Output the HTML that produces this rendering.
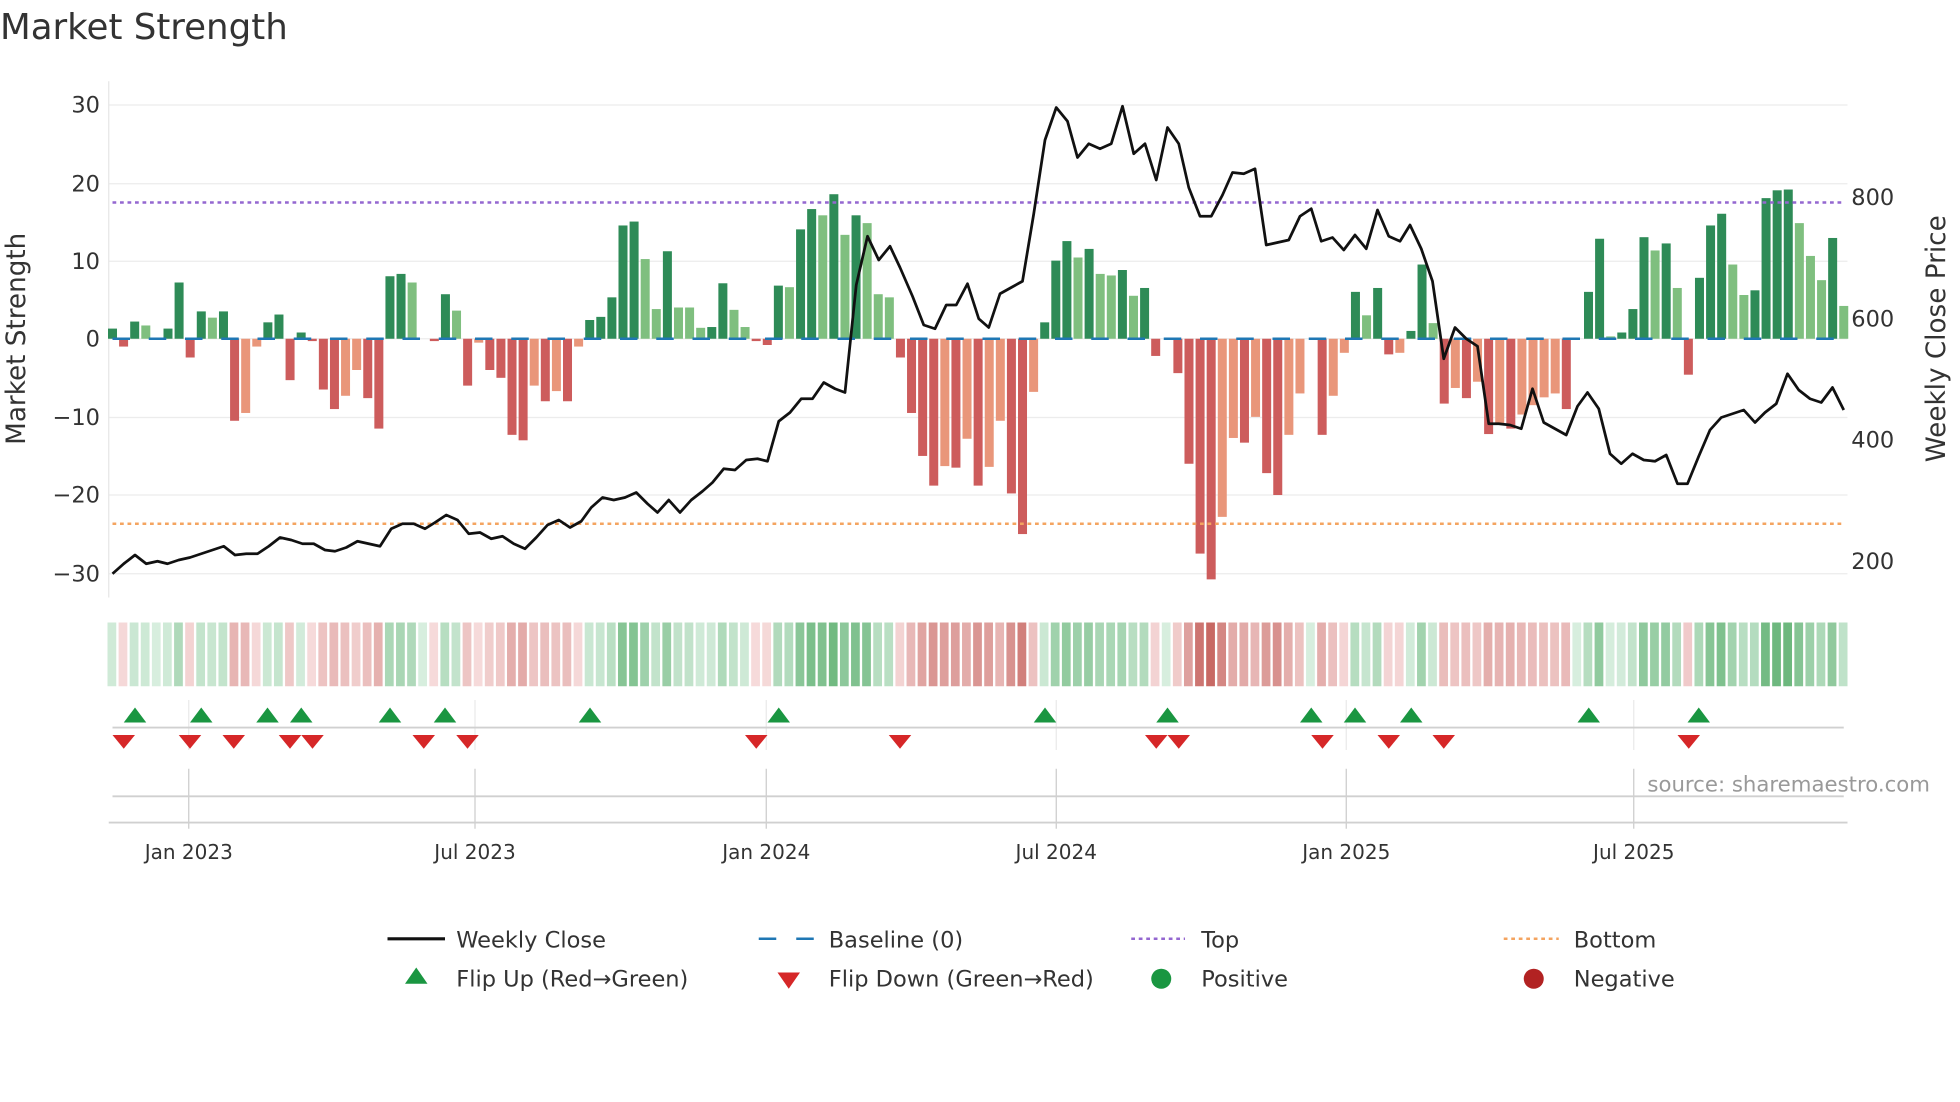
<!DOCTYPE html>
<html><head><meta charset="utf-8"><style>
html,body{margin:0;padding:0;background:#fff;}
svg{display:block;font-family:"DejaVu Sans","Liberation Sans",sans-serif;}
</style></head><body>
<svg id="s" width="1960" height="1102" viewBox="0 0 1568 881.6" xmlns="http://www.w3.org/2000/svg">
<rect width="1568" height="882" fill="#fff"/>
<text x="0" y="31" font-size="28.5" fill="#333">Market Strength</text>
<g id="grid" stroke="#ececec" stroke-width="1"></g>
<line x1="87" y1="65" x2="87" y2="478" stroke="#e6e6e6"/>
<g id="bars"></g>
<line x1="90" y1="271" x2="1478" y2="271" stroke="#1f77b4" stroke-width="2" stroke-dasharray="14 15"/>
<line x1="90" y1="162" x2="1476" y2="162" stroke="#9467d0" stroke-width="2" stroke-dasharray="3 3"/>
<line x1="90" y1="419" x2="1476" y2="419" stroke="#f4a460" stroke-width="2" stroke-dasharray="3 3"/>
<polyline id="price" fill="none" stroke="#111" stroke-width="2.2" stroke-linejoin="round"/>
<g font-size="18" fill="#333" text-anchor="end">
<text x="80" y="90">30</text><text x="80" y="153">20</text><text x="80" y="215">10</text><text x="80" y="277">0</text><text x="80" y="340">−10</text><text x="80" y="402">−20</text><text x="80" y="465">−30</text>
</g>
<g font-size="18" fill="#333">
<text x="1481" y="164">800</text><text x="1481" y="261">600</text><text x="1481" y="358">400</text><text x="1481" y="455">200</text>
</g>
<text transform="translate(20,271) rotate(-90)" font-size="21" fill="#333" text-anchor="middle">Market Strength</text>
<text transform="translate(1556,271) rotate(-90)" font-size="21" fill="#333" text-anchor="middle">Weekly Close Price</text>
<g id="heat"></g>
<g id="vgrid" stroke="#eaeaea"></g>
<line x1="90" y1="582" x2="1475" y2="582" stroke="#d0d0d0" stroke-width="1.5"/>
<line x1="90" y1="637" x2="1475" y2="637" stroke="#d0d0d0" stroke-width="1.5"/>
<line x1="87" y1="658" x2="1478" y2="658" stroke="#d0d0d0" stroke-width="1.5"/>
<g id="marks"></g>
<text x="1544" y="633" font-size="17" fill="#999" text-anchor="end">source: sharemaestro.com</text>
<g font-size="16" fill="#333" text-anchor="middle">
<text x="151" y="687">Jan 2023</text><text x="380" y="687">Jul 2023</text><text x="613" y="687">Jan 2024</text><text x="845" y="687">Jul 2024</text><text x="1077" y="687">Jan 2025</text><text x="1307" y="687">Jul 2025</text>
</g>
<g font-size="18" fill="#333">
<line x1="310" y1="751" x2="356" y2="751" stroke="#111" stroke-width="2.5"/><text x="365" y="758">Weekly Close</text>
<line x1="607" y1="751" x2="651" y2="751" stroke="#1f77b4" stroke-width="2" stroke-dasharray="14 16"/><text x="663" y="758">Baseline (0)</text>
<line x1="905" y1="751" x2="948" y2="751" stroke="#9467d0" stroke-width="2" stroke-dasharray="3 3"/><text x="961" y="758">Top</text>
<line x1="1203" y1="751" x2="1247" y2="751" stroke="#f4a460" stroke-width="2" stroke-dasharray="3 3"/><text x="1259" y="758">Bottom</text>
<polygon points="324,787 342,787 333,774" fill="#1a9641"/><text x="365" y="789">Flip Up (Red→Green)</text>
<polygon points="622,778 640,778 631,791" fill="#d62728"/><text x="663" y="789">Flip Down (Green→Red)</text>
<circle cx="929" cy="783" r="8" fill="#1a9641"/><text x="961" y="789">Positive</text>
<circle cx="1227" cy="783" r="8" fill="#b22222"/><text x="1259" y="789">Negative</text>
</g>
</svg>
<script>
var NS="http://www.w3.org/2000/svg";
function el(p,t,a){var e=document.createElementNS(NS,t);for(var k in a)e.setAttribute(k,a[k]);document.getElementById(p).appendChild(e);return e;}
[84,147,209,271,334,396,459].forEach(function(y){el("grid","line",{x1:87,x2:1478,y1:y,y2:y});});
var D="1.3d -1r 2.2d 1.7l 0d 1.3d 7.2d -2.4r 3.5d 2.7l 3.5d -10.5r -9.5s -1s 2.1d 3.1d -5.3r 0.8d -0.3r -6.5r -9r -7.3s -4s -7.6r -11.5r 8d 8.3d 7.2l 0d -0.3r 5.7d 3.6l -6r -0.5s -4r -5r -12.3r -13r -6s -8r -6.7s -8r -1s 2.4d 2.8d 5.3d 14.5d 15d 10.2l 3.8l 11.2d 4l 4l 1.4l 1.5d 7.1d 3.7l 1.5l -0.3r -0.8r 6.8d 6.6l 14d 16.6d 15.8l 18.5d 13.3l 15.8d 14.8l 5.7l 5.3l -2.4r -9.5r -15r -18.8r -16.3s -16.5r -12.8s -18.8r "+
"-16.4s -10.5s -19.8r -25r -6.8s 2.1d 10d 12.5d 10.4l 11.5d 8.3l 8.1l 8.8d 5.5l 6.5d -2.2r 0d -4.4r -16r -27.5r -30.8r -22.8s -12.7s -13.3r -10s -17.2r -20r -12.3s -7s 0d -12.3r -7.3s -1.8s 6d 3l 6.5d -2r -1.8s 1d 9.5d 2l -8.3r -6.3s -7.6r -5.5s -12.2r -10.8s -11.5r -9.7s -8.5s -7.5s -7s -9r 0d 6d 12.8d 0.3l 0.8d 3.8d 13d 11.3l 12.2d 6.5l -4.6r 7.8d 14.5d 16d 9.5l 5.6l 6.2d 18d 19d 19.1d 14.8l 10.6l 7.5l 12.9d 4.2l";
var arr=D.trim().split(/\s+/);
var col={d:"#2e8b57",l:"#7fbf7f",r:"#cd5c5c",s:"#e9967a"};
var n=arr.length,x0=90,step=(1475-90)/(n-1);
arr.forEach(function(t,i){var v=parseFloat(t),c=t.slice(-1),x=x0+i*step;
 var y=271-v*6.25;
 if(Math.abs(v)>0.05) el("bars","rect",{x:x-3.6,y:Math.min(y,271),width:7.2,height:Math.abs(v)*6.25,fill:col[c]});
 var a,r,g,b;
 if(v>=0){a=Math.min(v/20,1);r=215-(215-105)*a;g=238-(238-182)*a;b=222-(222-122)*a;}
 else{a=Math.min(-v/31,1);r=247-(247-200)*a;g=220-(220-105)*a;b=220-(220-100)*a;}
 el("heat","rect",{x:x-4,y:498,width:7,height:51,fill:"rgb("+(r|0)+","+(g|0)+","+(b|0)+")"});
});
[151,380,613,845,1077,1307].forEach(function(x){el("vgrid","line",{x1:x,x2:x,y1:560,y2:600});el("vgrid","line",{x1:x,x2:x,y1:615,y2:663,stroke:"#ccc"});});
[108,161,214,241,312,356,472,623,836,934,1049,1084,1129,1271,1359].forEach(function(x){el("marks","polygon",{points:(x-9)+",578 "+(x+9)+",578 "+x+",566",fill:"#1a9641"});});
[99,152,187,232,250,339,374,605,720,925,943,1058,1111,1155,1351].forEach(function(x){el("marks","polygon",{points:(x-9)+",588 "+(x+9)+",588 "+x+",599",fill:"#d62728"});});
var P="90,459 99,451 108,444 117,451 126,449 134,451 143,448 152,446 161,443 170,440 179,437 188,444 197,443 206,443 215,437 224,430 233,432 242,435 251,435 260,440 268,441 277,438 286,433 295,435 304,437 313,423 322,419 331,419 340,423 348,418 357,412 366,416 375,427 384,426 393,431 402,429 411,435 420,439 429,430 438,420 447,416 456,422 465,417 473,406 482,398 491,400 500,398 509,394 518,403 526,410 535,400 544,410 553,400 562,393 570,386 579,375 588,376 597,368 606,367 614,369 623,337 632,330 641,319 650,319 659,306 668,311 676,314 685,228 694,189 703,208 712,197 720,214 730,237 739,260 748,263 757,244 765,244 774,227 783,255 791,262 800,235 809,230 818,225 827,171 836,112 845,86 854,97 862,126 871,115 880,119 889,115 898,85 907,123 916,115 925,144 934,102 943,115 951,150 960,173 969,173 978,156 986,138 995,139 1004,135 1013,196 1022,194 1031,192 1040,173 1049,167 1057,193 1066,190 1075,200 1084,188 1093,199 1102,168 1111,189 1120,193 1128,180 1137,199 1146,225 1155,287 1164,262 1173,271 1182,277 1191,339 1199,339 1208,340 1217,343 1226,311 1235,338 1244,343 1253,348 1262,325 1270,314 1279,327 1288,363 1297,371 1306,363 1315,368 1324,369 1333,364 1342,387 1350,387 1359,365 1368,344 1377,334 1386,331 1395,328 1404,338 1412,330 1421,323 1430,299 1439,312 1448,319 1457,322 1466,310 1475,328";
document.getElementById("price").setAttribute("points",P);
</script>
</body></html>
